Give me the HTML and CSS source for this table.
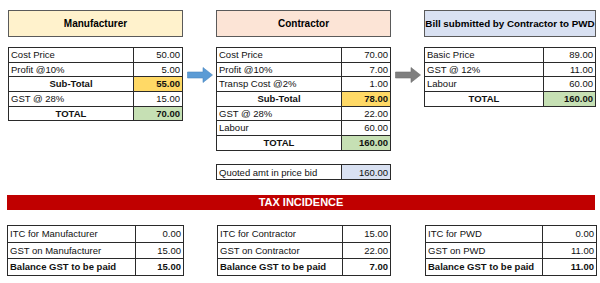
FILE: index.html
```
<!DOCTYPE html>
<html>
<head>
<meta charset="utf-8">
<link rel="stylesheet" href="styles.css">
</head>
<body>
<div class="top">
  <div class="col w175">
    <div class="head head-yellow">Manufacturer</div>
    <div class="grid g125">
      <div class="c">Cost Price</div><div class="c num">50.00</div>
      <div class="c">Profit @10%</div><div class="c num">5.00</div>
      <div class="c b ctr">Sub-Total</div><div class="c num b gold">55.00</div>
      <div class="c">GST @ 28%</div><div class="c num">15.00</div>
      <div class="c b ctr">TOTAL</div><div class="c num b green">70.00</div>
    </div>
  </div>
  <div class="gap">
    <svg width="26" height="16" viewBox="0 0 26 16"><polygon points="0.5,5 16,5 16,0.5 25.5,8 16,15.5 16,11 0.5,11" fill="#5b9bd5" stroke="#4a86c0" stroke-width="0.6"/></svg>
  </div>
  <div class="col w175">
    <div class="head head-peach">Contractor</div>
    <div class="grid g125">
      <div class="c">Cost Price</div><div class="c num">70.00</div>
      <div class="c">Profit @10%</div><div class="c num">7.00</div>
      <div class="c">Transp Cost @2%</div><div class="c num">1.00</div>
      <div class="c b ctr">Sub-Total</div><div class="c num b gold">78.00</div>
      <div class="c">GST @ 28%</div><div class="c num">22.00</div>
      <div class="c">Labour</div><div class="c num">60.00</div>
      <div class="c b ctr">TOTAL</div><div class="c num b green">160.00</div>
    </div>
    <div class="grid g125 quoted">
      <div class="c">Quoted amt in price bid</div><div class="c num blue">160.00</div>
    </div>
  </div>
  <div class="gap">
    <svg width="26" height="16" viewBox="0 0 26 16"><polygon points="0.5,5 16,5 16,0.5 25.5,8 16,15.5 16,11 0.5,11" fill="#7f7f7f" stroke="#6f6f6f" stroke-width="0.6"/></svg>
  </div>
  <div class="col w172">
    <div class="head head-blue">Bill submitted by Contractor to PWD</div>
    <div class="grid g119">
      <div class="c">Basic Price</div><div class="c num">89.00</div>
      <div class="c">GST @ 12%</div><div class="c num">11.00</div>
      <div class="c">Labour</div><div class="c num">60.00</div>
      <div class="c b ctr">TOTAL</div><div class="c num b green">160.00</div>
    </div>
  </div>
</div>

<div class="bar">TAX INCIDENCE</div>

<div class="bottom">
  <div class="grid tall t1">
    <div class="c">ITC for Manufacturer</div><div class="c num">0.00</div>
    <div class="c">GST on Manufacturer</div><div class="c num">15.00</div>
    <div class="c b">Balance GST to be paid</div><div class="c num b">15.00</div>
  </div>
  <div class="grid tall t2">
    <div class="c">ITC for Contractor</div><div class="c num">15.00</div>
    <div class="c">GST on Contractor</div><div class="c num">22.00</div>
    <div class="c b">Balance GST to be paid</div><div class="c num b">7.00</div>
  </div>
  <div class="grid tall t3">
    <div class="c">ITC for PWD</div><div class="c num">0.00</div>
    <div class="c">GST on PWD</div><div class="c num">11.00</div>
    <div class="c b">Balance GST to be paid</div><div class="c num b">11.00</div>
  </div>
</div>
</body>
</html>
```

FILE: styles.css
```
html, body {
  margin: 0;
  background: #ffffff;
}
body {
  font-family: "Liberation Sans", Arial, sans-serif;
  font-size: 9.5px;
  color: #111;
}
.top {
  display: flex;
  align-items: flex-start;
  padding: 10px 0 0 8px;
}
.col { display: flex; flex-direction: column; }
.w175 { width: 175px; }
.w172 { width: 172px; }
.gap {
  width: 33px;
  padding-top: 57px;
  display: flex;
  justify-content: center;
}
.gap svg { display: block; }
.head {
  height: 27px;
  box-sizing: border-box;
  border: 1.5px solid #5a5a5a;
  display: flex;
  align-items: center;
  justify-content: center;
  font-weight: bold;
  font-size: 10px;
  color: #000;
  margin-bottom: 10px;
}
.head-yellow { background: #fff2cc; }
.head-peach { background: #fce4d6; }
.head-blue { background: #d9e1f2; font-size: 9.8px; white-space: nowrap; }
.grid {
  display: grid;
  border-top: 1px solid #2a2a2a;
  border-left: 1px solid #2a2a2a;
}
.g125 { grid-template-columns: 125px 1fr; }
.g119 { grid-template-columns: 119px 1fr; }
.c {
  height: 13.7px;
  line-height: 14px;
  border-right: 1px solid #2a2a2a;
  border-bottom: 1px solid #2a2a2a;
  padding: 0 2px;
  white-space: nowrap;
  overflow: hidden;
}
.num { text-align: right; }
.b { font-weight: bold; }
.ctr { text-align: center; }
.gold { background: #ffd966; }
.green { background: #c6e0b4; }
.blue { background: #d9e1f2; }
.quoted { margin-top: 13px; }
.quoted .c { height: 14.5px; line-height: 15px; }
.bar {
  margin: 15px 5px 0 7px;
  height: 15px;
  line-height: 15px;
  background: #c00000;
  color: #ffffff;
  font-weight: bold;
  font-size: 11px;
  text-align: center;
}
.bottom {
  display: flex;
  align-items: flex-start;
  margin-top: 15px;
  padding-left: 7px;
}
.tall .c {
  height: 15.5px;
  line-height: 16px;
}
.t1 { width: 176px; grid-template-columns: 128px 1fr; }
.t2 { width: 173px; grid-template-columns: 125px 1fr; margin-left: 33px; }
.t3 { width: 171px; grid-template-columns: 117px 1fr; margin-left: 34px; }
```
